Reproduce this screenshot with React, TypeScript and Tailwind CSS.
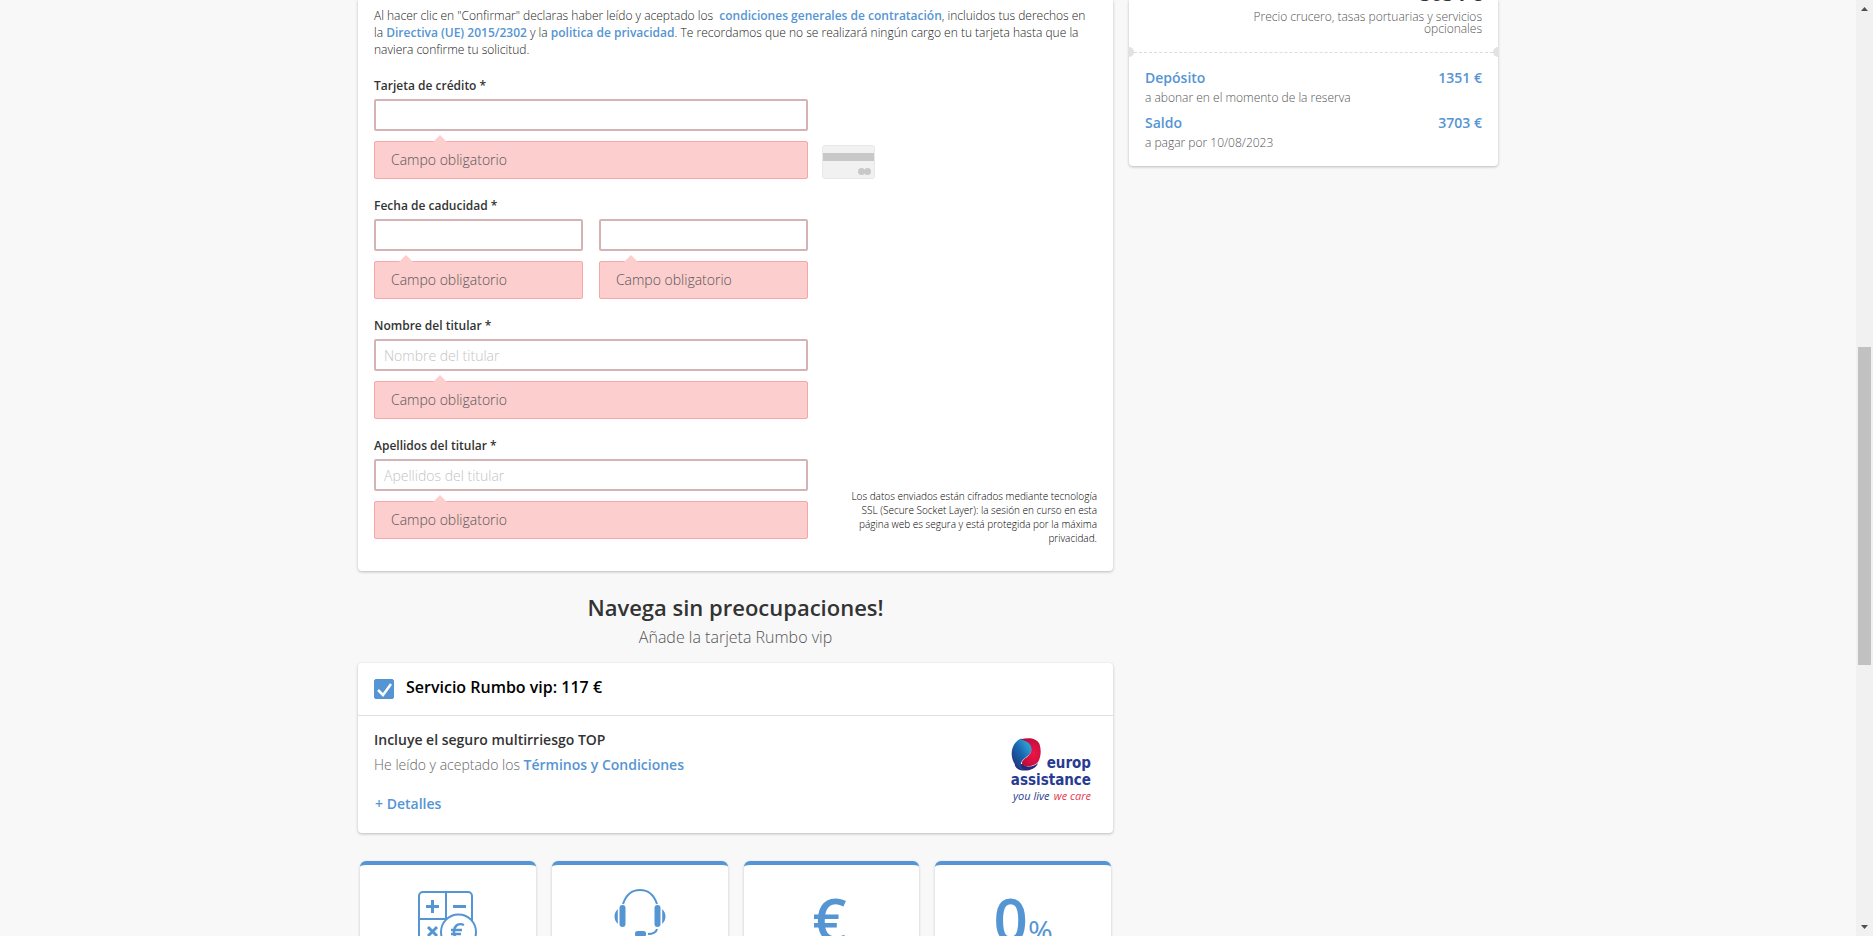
import { useId, useState, type ReactNode } from "react";

const link = "font-semibold text-[#5595d3] hover:underline";
const card = "rounded-[4px] bg-white shadow-[0_1px_3px_rgba(0,0,0,0.25)]";

function ErrorBubble({ id, narrow }: { id: string; narrow?: boolean }) {
  return (
    <div
      id={id}
      role="alert"
      className="relative mt-[10px] flex h-[38px] items-center rounded-[2px] border border-[#f9a6a6] bg-[#fccece] px-4 pb-[2px] text-[14px] font-light text-[#555]"
    >
      <svg
        viewBox="0 0 14 8"
        aria-hidden="true"
        className={
          narrow
            ? "absolute -top-[8px] left-[24px] h-[8px] w-[14px]"
            : "absolute -top-[8px] left-[58px] h-[8px] w-[14px]"
        }
      >
        <path d="M0 8 7 1l7 7z" fill="#fccece" />
      </svg>
      Campo obligatorio
    </div>
  );
}

const inputClass =
  "block h-8 w-full rounded-[2px] border-2 border-[#d5b3b4] bg-white px-2 text-[14px] font-light text-[#333] outline-none placeholder:text-[#c4c4c4]";

function Field({ label, placeholder }: { label: string; placeholder?: string }) {
  const id = useId();
  return (
    <div>
      <label htmlFor={id} className="mb-[5px] block text-[12px] leading-[17px] font-semibold text-[#333]">
        {label} *
      </label>
      <input id={id} type="text" placeholder={placeholder} aria-describedby={id + "e"} className={inputClass} />
      <ErrorBubble id={id + "e"} />
    </div>
  );
}

function ExpiryFields() {
  const id = useId();
  return (
    <fieldset>
      <legend className="mb-[5px] block text-[12px] leading-[17px] font-semibold text-[#333]">
        Fecha de caducidad *
      </legend>
      <div className="grid grid-cols-2 gap-4">
        {["Mes", "Año"].map((part) => (
          <div key={part}>
            <input type="text" aria-label={part} aria-describedby={id + part} className={inputClass} />
            <ErrorBubble id={id + part} narrow />
          </div>
        ))}
      </div>
    </fieldset>
  );
}

function CardIcon() {
  return (
    <svg viewBox="0 0 53 34" className="h-[34px] w-[53px]" aria-hidden="true">
      <rect x=".5" y=".5" width="52" height="33" rx="2.5" fill="#f1f1f1" stroke="#e8e8e8" />
      <rect x="1" y="8" width="51" height="8" fill="#c8c8c8" />
      <circle cx="39.5" cy="26.5" r="3.5" fill="#c8c8c8" />
      <circle cx="45.5" cy="26.5" r="3.5" fill="#c8c8c8" />
    </svg>
  );
}

function EuropLogo() {
  return (
    <svg viewBox="0 0 82 70" className="h-[70px] w-[82px]" role="img" aria-label="Europ Assistance">
      <defs>
        <linearGradient id="blueSide" x1="1" y1="0" x2="0" y2="1">
          <stop offset=".2" stopColor="#2f9ad6" />
          <stop offset=".5" stopColor="#1a66ae" />
          <stop offset="1" stopColor="#24266f" />
        </linearGradient>
        <radialGradient id="redSide" cx=".65" cy=".55" r=".7">
          <stop offset="0" stopColor="#f01446" />
          <stop offset="1" stopColor="#b30d3a" />
        </radialGradient>
      </defs>
      <path d="M12 27c4 4 11 3 15-1-2 6-9 8-15 7.500C6 33 3 29 4 27z" fill="#28287a" />
      <path d="M10 1.500C4 4 0 11 .8 18.500 1.500 26 6 32 13 33c-3-2-4.500-5-2-9 3-4 9.500-6 10-12C21.500 6 15 3 10 1.500z" fill="url(#blueSide)" />
      <path d="M9.500 2.500C17 0 26 1 28.500 7c2 6 1.500 13-1.500 18-3 4-12 6-15.500 2.500-1.500-2 0-4 2.500-6 4-3 6.500-5 6.500-9.500C20.500 6 15 4 9.500 2.500z" fill="url(#redSide)" />
      <g fill="#283b91" fontFamily="'DejaVu Sans Condensed', 'DejaVu Sans', sans-serif" fontWeight="700" fontSize="15">
        <text x="80" y="31" textAnchor="end">europ</text>
        <text x="80" y="48" textAnchor="end">assistance</text>
      </g>
      <g fontFamily="'Open Sans', sans-serif" fontStyle="italic" fontSize="11">
        <text x="2" y="63" fill="#283b91">you live</text>
        <text x="80" y="63" fill="#e8384f" textAnchor="end">we care</text>
      </g>
    </svg>
  );
}

function CalculatorIcon() {
  return (
    <svg viewBox="0 0 60 60" className="h-[60px] w-[60px]" fill="none" stroke="#5595d3" strokeWidth="2" aria-hidden="true">
      <rect x="1" y="1" width="53" height="54" rx="4" />
      <path d="M28 1v54M1 28h53" />
      <path d="M8 15.500h13M14.500 9v13M35 15.500h13M10 36l9 9m0-9-9 9" strokeWidth="3" />
      <circle cx="40.500" cy="41" r="17.500" fill="#fff" />
      <path d="M46 34c-6-2.500-10 1-10 7s4 9.500 10 7M33 39h11M33 43h10" strokeWidth="2.400" />
    </svg>
  );
}

function HeadsetIcon() {
  return (
    <svg viewBox="0 0 52 60" className="h-[60px] w-[52px]" fill="none" stroke="#5595d3" strokeWidth="2" aria-hidden="true">
      <path d="M9 15C12 6 18 1 26 1s14 5 17 14M43 40c-1 4-4 5-9 5" />
      <g fill="#5595d3" stroke="none">
        <rect x="5.500" y="16" width="6" height="22" rx="3" />
        <rect x="40.500" y="16" width="6" height="22" rx="3" />
        <path d="M3.800 20v15C-.6 31 -.6 24 3.800 20zM48.200 20v15c4.400-4 4.400-11 0-15z" />
        <rect x="21" y="42" width="11" height="6" rx="2.500" />
      </g>
    </svg>
  );
}

function Benefit({ children }: { children: ReactNode }) {
  return (
    <li className="flex h-[220px] justify-center rounded-[6px] border-t-4 border-[#5595d3] bg-white shadow-[0_1px_3px_rgba(0,0,0,0.2)]">
      {children}
    </li>
  );
}

function PaymentForm() {
  return (
    <form className={`${card} rounded-t-none px-4 pt-[7px] pb-8`}>
      <p className="text-[12px] leading-[17px] font-light text-[#222]">
        Al hacer clic en "Confirmar" declaras haber leído y aceptado los{" \u00a0"}
        <a href="#condiciones" className={link}>condiciones generales de contratación</a>, incluidos tus derechos en
        <br />
        la <a href="#directiva" className={link}>Directiva (UE) 2015/2302</a> y la{" "}
        <a href="#privacidad" className={link}>politica de privacidad</a>. Te recordamos que no se realizará ningún
        cargo en tu tarjeta hasta que la
        <br />
        naviera confirme tu solicitud.
      </p>
      <div className="mt-[19px] flex justify-between">
        <div className="flex w-3/5 flex-col gap-[18px]">
          <Field label="Tarjeta de crédito" />
          <ExpiryFields />
          <Field label="Nombre del titular" placeholder="Nombre del titular" />
          <Field label="Apellidos del titular" placeholder="Apellidos del titular" />
        </div>
        <div className="flex flex-1 flex-col justify-between pt-[68px] pl-[14px]">
          <CardIcon />
          <p className="-mb-[6px] self-end w-[250px] text-right text-[10px] leading-[14px] font-light text-black">
            Los datos enviados están cifrados mediante tecnología SSL (Secure Socket Layer): la sesión en curso en esta
            página web es segura y está protegida por la máxima privacidad.
          </p>
        </div>
      </div>
    </form>
  );
}

function VipCard() {
  const [checked, setChecked] = useState(true);
  return (
    <section className={card}>
      <div className="flex h-[53px] items-start border-b border-[#dfdfdf] px-4 pt-4">
        <span className="relative h-5 w-5">
          <input
            id="vip"
            type="checkbox"
            checked={checked}
            onChange={(e) => setChecked(e.target.checked)}
            className="block h-5 w-5 appearance-none rounded-[2px] border border-[#5595d3] checked:bg-[#5595d3]"
          />
          {checked && (
            <svg viewBox="0 0 20 20" className="pointer-events-none absolute inset-0 h-5 w-5" aria-hidden="true">
              <path d="m4 11 5 5 8-11" fill="none" stroke="#fff" strokeWidth="2.500" />
            </svg>
          )}
        </span>
        <label htmlFor="vip" className="ml-3 text-[16px] leading-[16px] font-semibold text-black">
          Servicio Rumbo vip: 117 €
        </label>
      </div>
      <div className="flex justify-between pt-[11px] pr-5 pb-[17px] pl-4">
        <div className="text-[14px] leading-[25px]">
          <h3 className="font-semibold text-[#333]">Incluye el seguro multirriesgo TOP</h3>
          <p className="font-light text-[#666]">
            He leído y aceptado los <a href="#terminos" className={link}>Términos y Condiciones</a>
          </p>
          <button type="button" className="mt-[14px] pl-px font-semibold text-[#5595d3]">+ Detalles</button>
        </div>
        <div className="pt-[10px]">
          <EuropLogo />
        </div>
      </div>
    </section>
  );
}

function Summary() {
  return (
    <aside className={`${card} h-fit overflow-hidden rounded-t-none pb-[15px]`}>
      <div className="px-4 text-right">
        <p className="-mt-[22px] mb-px text-[20px] leading-8 font-bold text-[#333]">5054 €</p>
        <p className="ml-auto w-[240px] text-[12px] leading-[12px] font-light text-[#555]">
          Precio crucero, tasas portuarias y servicios opcionales
        </p>
      </div>
      <div className="-mx-[5px] mt-3 flex items-center">
        <span className="h-[10px] w-[10px] rounded-full bg-[#e2e2e2]" />
        <span className="flex-1 border-t border-dashed border-[#ddd]" />
        <span className="h-[10px] w-[10px] rounded-full bg-[#e2e2e2]" />
      </div>
      <dl className="mt-[10px] flex flex-col gap-[6px] px-4">
        {[
          ["Depósito", "1351 €", "a abonar en el momento de la reserva"],
          ["Saldo", "3703 €", "a pagar por 10/08/2023"],
        ].map(([name, price, note]) => (
          <div key={name} className="grid grid-cols-[1fr_auto]">
            <dt className="text-[14px] leading-[22px] font-semibold text-[#5595d3]">{name}</dt>
            <dd className="text-[14px] leading-[22px] font-semibold text-[#5595d3]">{price}</dd>
            <dd className="col-span-2 text-[12px] leading-[17px] font-light text-[#555]">{note}</dd>
          </div>
        ))}
      </dl>
    </aside>
  );
}

function Scrollbar() {
  return (
    <div className="flex w-[17px] flex-col items-center bg-[#f1f1f1]" aria-hidden="true">
      <svg viewBox="0 0 17 17" className="h-[17px] w-[17px]"><path d="M5 11h7L8.500 7z" fill="#505050" /></svg>
      <div className="flex-[330]" />
      <div className="w-[13px] flex-[318] bg-[#c1c1c1]" />
      <div className="flex-[254]" />
      <svg viewBox="0 0 17 17" className="h-[17px] w-[17px]"><path d="M5 6h7l-3.500 4z" fill="#505050" /></svg>
    </div>
  );
}

export default function App() {
  return (
    <div className="flex h-screen overflow-hidden bg-[#f8f8f8] font-['Open_Sans',sans-serif]">
      <div className="flex-1 overflow-hidden">
        <div className="mx-auto grid max-w-[1140px] grid-cols-[755fr_369fr] gap-4">
          <main>
            <PaymentForm />
            <header className="pt-5 pb-3 text-center">
              <h2 className="text-[22px] leading-8 font-semibold text-[#333]">Navega sin preocupaciones!</h2>
              <p className="text-[16px] leading-7 font-light text-[#555]">Añade la tarjeta Rumbo vip</p>
            </header>
            <VipCard />
            <ul className="mt-7 grid grid-cols-4 gap-4 px-[2px]">
              <Benefit>
                <div className="pt-[26px]"><CalculatorIcon /></div>
              </Benefit>
              <Benefit>
                <div className="pt-6"><HeadsetIcon /></div>
              </Benefit>
              <Benefit>
                <span className="pt-4 pr-1 text-[60px] leading-[76px] font-semibold text-[#5595d3]">€</span>
              </Benefit>
              <Benefit>
                <span className="pt-4 text-[60px] leading-[76px] font-semibold text-[#5595d3]">
                  0<span className="text-[30px] font-normal">%</span>
                </span>
              </Benefit>
            </ul>
          </main>
          <Summary />
        </div>
      </div>
      <Scrollbar />
    </div>
  );
}
